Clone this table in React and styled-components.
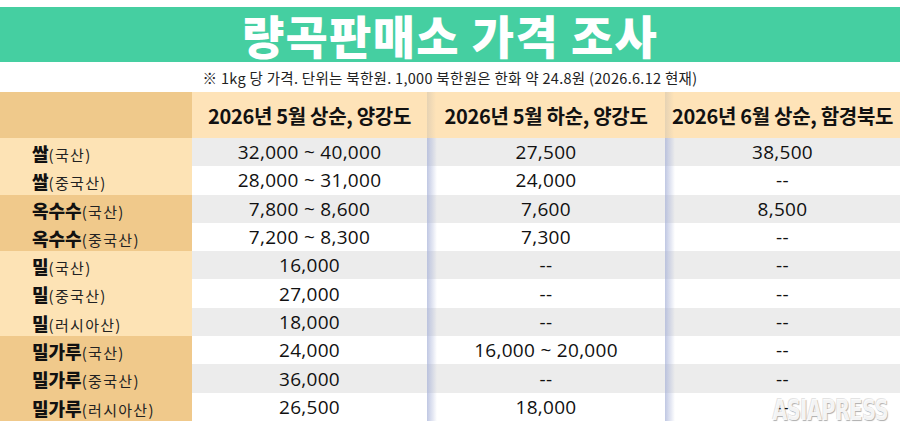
import styled, { createGlobalStyle } from 'styled-components';

const GlobalStyle = createGlobalStyle`
  body {
    margin: 0;
    background: #ffffff;
    font-family: "Noto Sans CJK KR", "Noto Sans", sans-serif;
  }
`;

const columns = ['2026년 5월 상순, 양강도', '2026년 5월 하순, 양강도', '2026년 6월 상순, 함경북도'];

const rows = [
  { name: '쌀', origin: '국산', group: 'light', values: ['32,000 ~ 40,000', '27,500', '38,500'] },
  { name: '쌀', origin: '중국산', group: 'light', values: ['28,000 ~ 31,000', '24,000', '--'] },
  { name: '옥수수', origin: '국산', group: 'dark', values: ['7,800 ~ 8,600', '7,600', '8,500'] },
  { name: '옥수수', origin: '중국산', group: 'dark', values: ['7,200 ~ 8,300', '7,300', '--'] },
  { name: '밀', origin: '국산', group: 'light', values: ['16,000', '--', '--'] },
  { name: '밀', origin: '중국산', group: 'light', values: ['27,000', '--', '--'] },
  { name: '밀', origin: '러시아산', group: 'light', values: ['18,000', '--', '--'] },
  { name: '밀가루', origin: '국산', group: 'dark', values: ['24,000', '16,000 ~ 20,000', '--'] },
  { name: '밀가루', origin: '중국산', group: 'dark', values: ['36,000', '--', '--'] },
  { name: '밀가루', origin: '러시아산', group: 'dark', values: ['26,500', '18,000', '--'] },
];

function App() {
  return (
    <>
      <GlobalStyle />
      <Page>
        <TitleBand>
          <Title>량곡판매소 가격 조사</Title>
        </TitleBand>
        <Note>※ 1kg 당 가격. 단위는 북한원. 1,000 북한원은 한화 약 24.8원 (2026.6.12 현재)</Note>
        <Table>
          <CornerCell />
          {columns.map((c, i) => (
            <HeadCell key={c} $shadow={i > 0}>{c}</HeadCell>
          ))}
          {rows.map((r, ri) => (
            <Row key={ri}>
              <LabelCell $group={r.group}>
                <Grain>{r.name}</Grain>
                <Origin>({r.origin})</Origin>
              </LabelCell>
              {r.values.map((v, ci) => (
                <ValueCell key={ci} $striped={ri % 2 === 0} $shadow={ci > 0}>
                  {v}
                </ValueCell>
              ))}
            </Row>
          ))}
        </Table>
        <Watermark>ASIAPRESS</Watermark>
      </Page>
    </>
  );
}

const Page = styled.div`
  position: relative;
  width: 900px;
  height: 437px;
  overflow: hidden;
  padding-top: 7px;
  box-sizing: border-box;
  background: #ffffff;
`;

const TitleBand = styled.div`
  height: 55px;
  background: #45cfa1;
  display: flex;
  align-items: center;
  justify-content: center;
`;

const Title = styled.h1`
  margin: 0;
  color: #ffffff;
  font-size: 46px;
  font-weight: 900;
  letter-spacing: 1.3px;
  line-height: 1;
  padding-bottom: 2px;
`;

const Note = styled.div`
  height: 30px;
  display: flex;
  align-items: center;
  justify-content: center;
  font-size: 14.5px;
  color: #222222;
  letter-spacing: 0.3px;
`;

const Table = styled.div`
  display: grid;
  grid-template-columns: 192px 235px 238px 235px;
  grid-template-rows: 46px repeat(10, 28.3px);
`;

const Row = styled.div`
  display: contents;
`;

const CornerCell = styled.div`
  background: #efc98b;
`;

const HeadCell = styled.div`
  display: flex;
  align-items: center;
  justify-content: center;
  font-size: 20px;
  font-weight: 700;
  color: #111111;
  letter-spacing: -0.3px;
  background: ${p => p.$shadow
    ? 'linear-gradient(to right, rgba(200, 190, 175, 0.45), rgba(200, 190, 175, 0) 9px), #fee3b8'
    : '#fee3b8'};
`;

const LabelCell = styled.div`
  display: flex;
  align-items: baseline;
  padding-left: 32px;
  padding-top: 2px;
  box-sizing: border-box;
  background: ${p => (p.$group === 'dark' ? '#f0c98b' : '#fde3b5')};
`;

const Grain = styled.span`
  font-size: 18px;
  font-weight: 900;
  color: #111111;
`;

const Origin = styled.span`
  font-size: 15px;
  letter-spacing: 1.3px;
  color: #222222;
`;

const ValueCell = styled.div`
  display: flex;
  align-items: center;
  justify-content: center;
  font-family: "Open Sans", "Noto Sans", sans-serif;
  font-size: 19px;
  letter-spacing: 0.3px;
  color: #111111;
  background: ${p => {
    const base = p.$striped ? '#ececec' : '#ffffff';
    return p.$shadow
      ? `linear-gradient(to right, rgba(165, 176, 215, 0.7), rgba(165, 176, 215, 0) 10px), ${base}`
      : base;
  }};
`;

const Watermark = styled.div`
  position: absolute;
  right: 12px;
  bottom: 10px;
  font-family: "Liberation Sans Narrow", "DejaVu Sans Condensed", sans-serif;
  font-weight: 700;
  font-size: 28px;
  color: rgba(255, 255, 255, 0.9);
  transform: scaleX(0.76);
  transform-origin: right bottom;
  letter-spacing: -0.5px;
  text-shadow: 1px 1px 1px rgba(120, 120, 120, 0.6), -1px -1px 0 rgba(200, 200, 200, 0.5);
`;

export default App;
